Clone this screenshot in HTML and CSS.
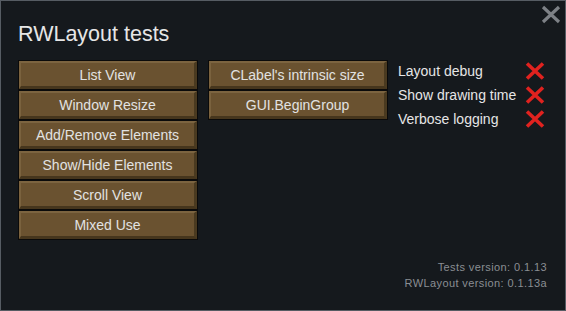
FILE: index.html
```html
<!DOCTYPE html>
<html lang="en">
<head>
  <meta charset="UTF-8" />
  <title>RWLayout tests</title>
  <link rel="stylesheet" href="styles.css">
</head>
<body>
  <div class="window">
    <svg class="close" width="20" height="19" viewBox="0 0 20 19">
      <path d="M2 2 L18 17 M18 2 L2 17" stroke="#7d8186" stroke-width="3.2" />
    </svg>

    <h1 class="title">RWLayout tests</h1>

    <div class="content">
      <div class="column">
        <div class="btn"><span>List View</span></div>
        <div class="btn"><span>Window Resize</span></div>
        <div class="btn"><span>Add/Remove Elements</span></div>
        <div class="btn"><span>Show/Hide Elements</span></div>
        <div class="btn"><span>Scroll View</span></div>
        <div class="btn"><span>Mixed Use</span></div>
      </div>

      <div class="column">
        <div class="btn"><span>CLabel's intrinsic size</span></div>
        <div class="btn"><span>GUI.BeginGroup</span></div>
      </div>

      <div class="options">
        <div class="option">
          <span>Layout debug</span>
          <svg class="cross" width="20" height="18" viewBox="0 0 20 18"><path d="M2 1.5 L18 16.5 M18 1.5 L2 16.5" /></svg>
        </div>
        <div class="option">
          <span>Show drawing time</span>
          <svg class="cross" width="20" height="18" viewBox="0 0 20 18"><path d="M2 1.5 L18 16.5 M18 1.5 L2 16.5" /></svg>
        </div>
        <div class="option">
          <span>Verbose logging</span>
          <svg class="cross" width="20" height="18" viewBox="0 0 20 18"><path d="M2 1.5 L18 16.5 M18 1.5 L2 16.5" /></svg>
        </div>
      </div>
    </div>

    <div class="footer">
      <div>Tests version: 0.1.13</div>
      <div>RWLayout version: 0.1.13a</div>
    </div>
  </div>
</body>
</html>
```

FILE: styles.css
```css
body {
  margin: 0;
  background: #15191d;
  font-family: 'Liberation Sans', Arial, sans-serif;
}

.window {
  position: relative;
  box-sizing: border-box;
  width: 566px;
  height: 311px;
  background: #15191d;
  border: 1px solid #565c63;
  padding: 0 18px 0 17px;
  display: flex;
  flex-direction: column;
}

.close {
  position: absolute;
  top: 4px;
  right: 4px;
}

.title {
  margin: 21px 0 0 0;
  font-size: 21.5px;
  line-height: 24px;
  font-weight: normal;
  color: #e6e6e6;
}

.content {
  display: flex;
  gap: 10px;
  margin-top: 14px;
}

.column {
  display: flex;
  flex-direction: column;
  width: 180px;
}

.btn {
  height: 30px;
  box-sizing: border-box;
  border: 1px solid #0a0a0a;
}

.btn span {
  display: flex;
  align-items: center;
  justify-content: center;
  box-sizing: border-box;
  height: 100%;
  background: #6a5230;
  border-style: solid;
  border-width: 2px 3px 3px 2px;
  border-color: #7c6440 #4a3a20 #46361d #7a623e;
  color: #e2e2e2;
  font-size: 14px;
}

.options {
  display: flex;
  flex-direction: column;
  margin-top: -1px;
}

.option {
  display: grid;
  grid-template-columns: 127px 20px;
  align-items: center;
  height: 24px;
  color: #e6e6e6;
  font-size: 14px;
}

.cross path {
  stroke: #e0221f;
  stroke-width: 3.6;
  fill: none;
}

.footer {
  margin-top: auto;
  margin-bottom: 19px;
  text-align: right;
  color: #8a8e93;
  font-size: 11px;
  line-height: 16px;
  letter-spacing: 0.4px;
}
```
